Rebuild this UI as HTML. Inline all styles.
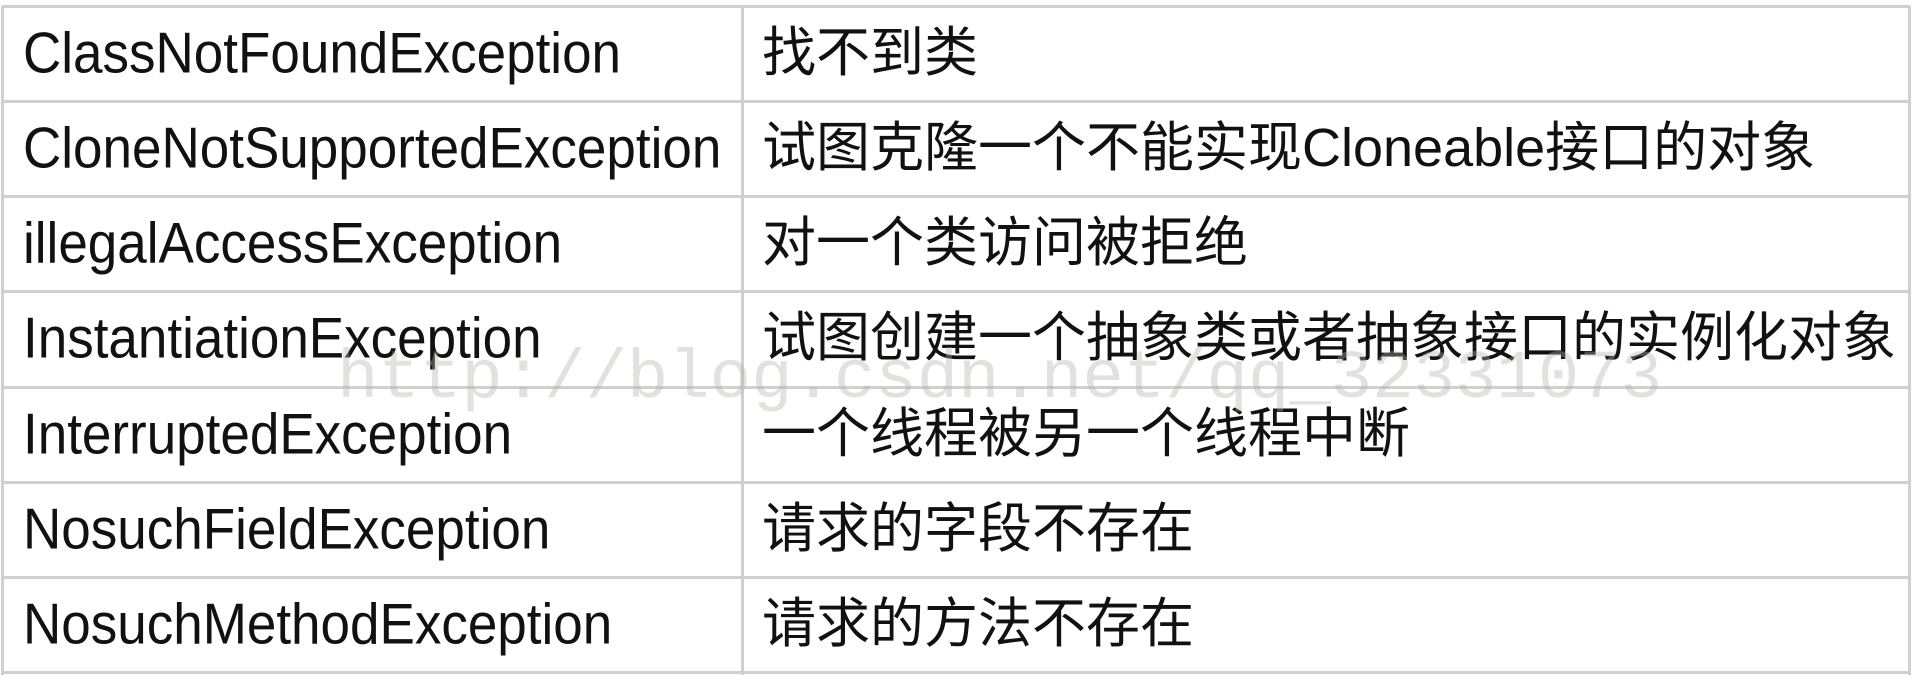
<!DOCTYPE html>
<html><head><meta charset="utf-8"><style>
body{margin:0;width:1920px;height:683px;background:#fff;position:relative;overflow:hidden;font-family:"Liberation Sans","Noto Sans CJK SC",sans-serif;color:#111}
.h{position:absolute;left:2px;width:1908px;height:3px;background:#d0d0d0}
.v{position:absolute;top:6px;height:669px;width:3px;background:#d0d0d0}
.t{position:absolute;font-size:53px;line-height:95px;height:95px;white-space:nowrap;transform:scaleY(1.08);transform-origin:0 50%}
.c{font-size:54px;transform:none}
.wm{position:absolute;left:337px;top:340px;font-family:"Liberation Mono",monospace;font-size:69px;color:rgba(175,175,165,0.38);white-space:nowrap}
</style></head><body>
<div class="h" style="top:5px"></div><div class="h" style="top:100px"></div><div class="h" style="top:195px"></div><div class="h" style="top:290px"></div><div class="h" style="top:386px"></div><div class="h" style="top:481px"></div><div class="h" style="top:576px"></div><div class="h" style="top:671px"></div>
<div class="v" style="left:1px"></div><div class="v" style="left:741px"></div><div class="v" style="left:1908px"></div>
<div class="t" style="left:23px;top:6px">ClassNotFoundException</div><div class="t c" style="left:762px;top:6px">找不到类</div>
<div class="t" style="left:23px;top:101px">CloneNotSupportedException</div><div class="t c" style="left:762px;top:101px">试图克隆一个不能实现Cloneable接口的对象</div>
<div class="t" style="left:23px;top:196px">illegalAccessException</div><div class="t c" style="left:762px;top:196px">对一个类访问被拒绝</div>
<div class="t" style="left:23px;top:291px">InstantiationException</div><div class="t c" style="left:762px;top:291px">试图创建一个抽象类或者抽象接口的实例化对象</div>
<div class="t" style="left:23px;top:387px">InterruptedException</div><div class="t c" style="left:762px;top:387px">一个线程被另一个线程中断</div>
<div class="t" style="left:23px;top:482px">NosuchFieldException</div><div class="t c" style="left:762px;top:482px">请求的字段不存在</div>
<div class="t" style="left:23px;top:577px">NosuchMethodException</div><div class="t c" style="left:762px;top:577px">请求的方法不存在</div>
<div class="wm">http://blog.csdn.net/qq_32331073</div>
</body></html>
